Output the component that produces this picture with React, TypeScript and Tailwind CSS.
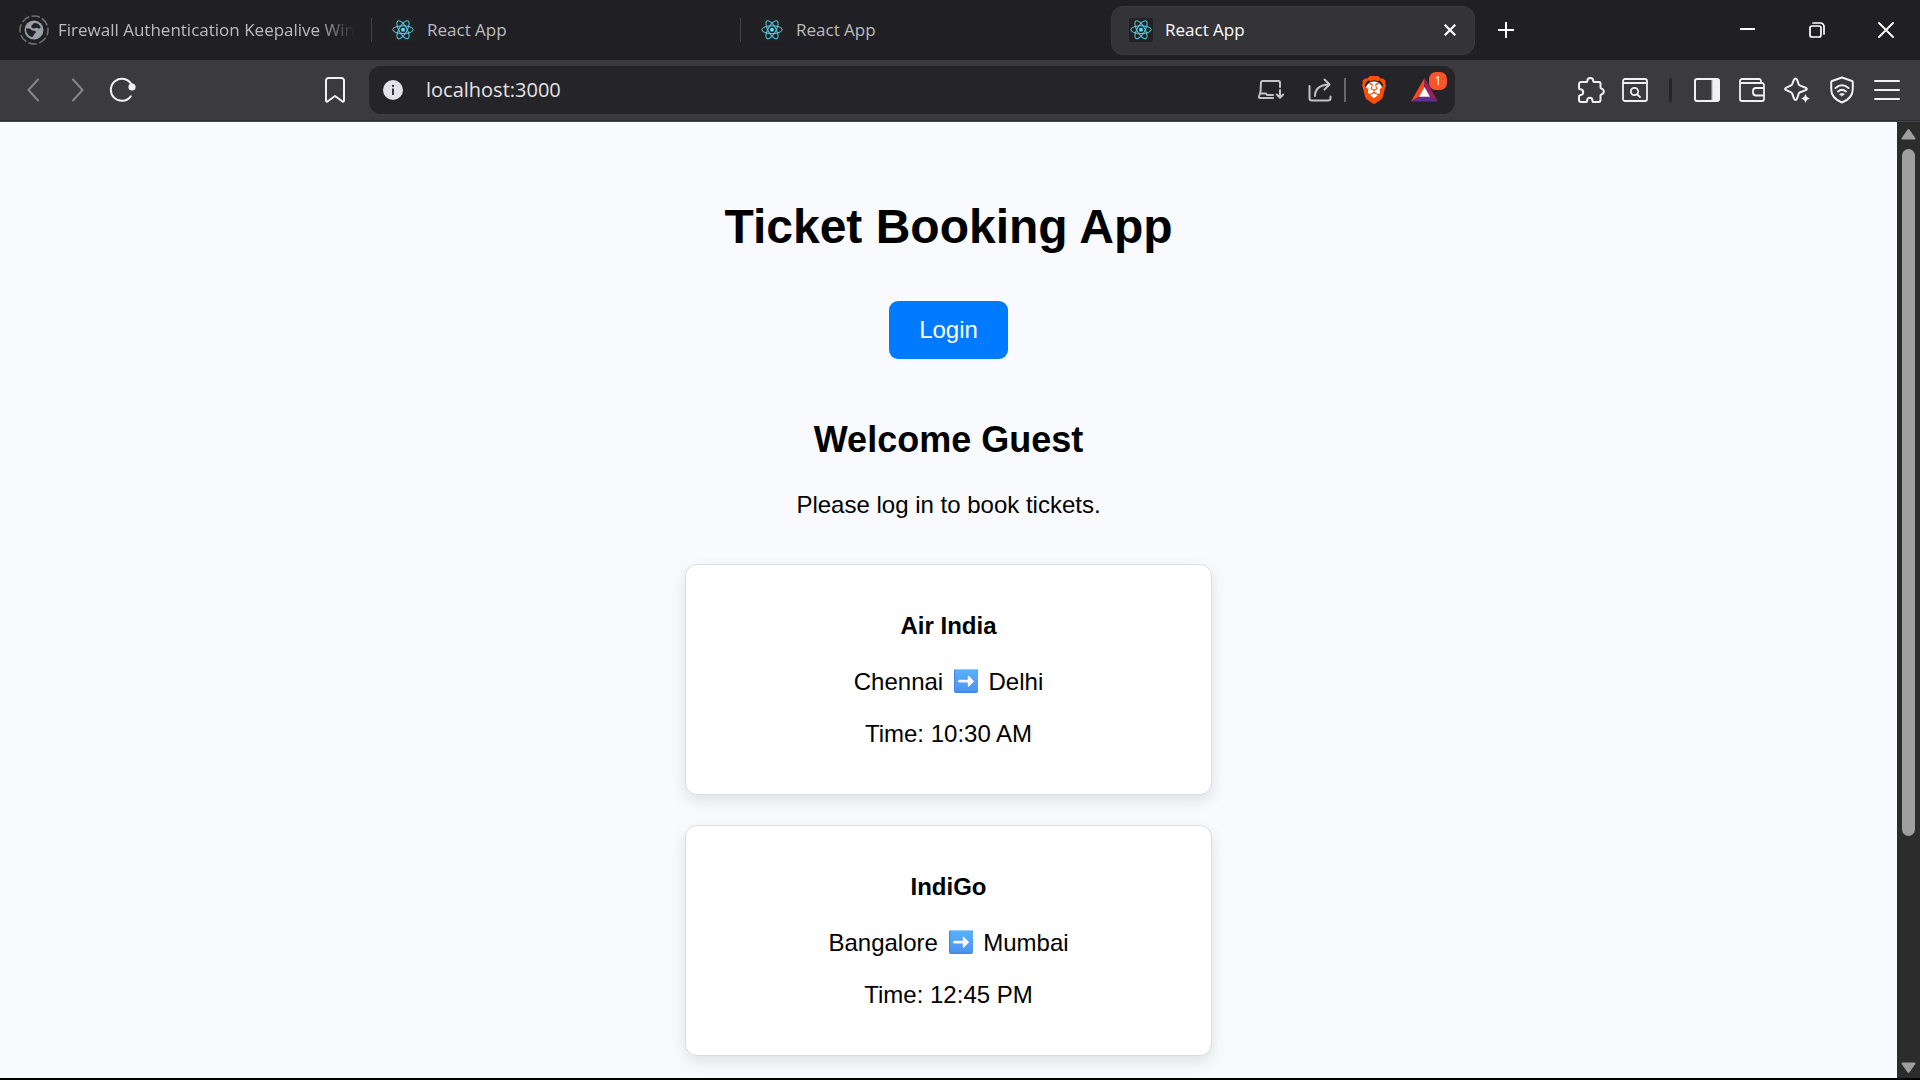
import type { ReactNode } from "react";
import { SiBrave } from "react-icons/si";

const strokeProps = {
  fill: "none",
  stroke: "currentColor",
  strokeWidth: 2,
  strokeLinecap: "round" as const,
  strokeLinejoin: "round" as const,
  "aria-hidden": true,
};

function ReactLogo() {
  return (
    <svg viewBox="0 0 24 24" className="size-6 shrink-0" aria-hidden="true">
      <rect width="24" height="24" rx="2" fill="#222222" />
      <g fill="none" stroke="#5ccfee" strokeWidth="1">
        <ellipse cx="12" cy="11.7" rx="10.2" ry="3.9" />
        <ellipse cx="12" cy="11.7" rx="10.2" ry="3.9" transform="rotate(60 12 11.7)" />
        <ellipse cx="12" cy="11.7" rx="10.2" ry="3.9" transform="rotate(120 12 11.7)" />
      </g>
      <circle cx="12" cy="11.7" r="2" fill="#61dafb" />
    </svg>
  );
}

function LoadingGlobe() {
  return (
    <svg viewBox="0 0 32 32" className="size-8 shrink-0" aria-hidden="true">
      <circle cx="16" cy="16" r="14" fill="none" stroke="#6f6f73" strokeWidth="1.6" strokeDasharray="8.6 2.4" strokeDashoffset="3" />
      <circle cx="16" cy="16" r="9.500" fill="#9aa0a6" />
      <path d="M8 14.500c2.300 0 4.300-.200 5 .900.800 1.200 1.700 1.300 3.300 1.300 1.500 0 2 1.300 1.200 2.300-.700.900-1.800 1-1.900 2.300-.100 1-.700 1.700-1.700 1.700C10.500 22 7.800 19 8 14.500Z" fill="#201f24" />
      <path d="M16 9c3-.200 5.600 1.400 6.800 4.200-.900 1.400-2.300 1.500-3.400.900-1.300-.700-2.400.400-3.900.300-1.700-.100-2.600-1.500-2-2.900.300-.800 1.400-.700 1.700-1.300.2-.5.400-.9.800-1.200Z" fill="#201f24" />
    </svg>
  );
}

function RouteArrow() {
  return (
    <svg viewBox="0 0 24 24" className="mx-1 inline-block size-6 align-[-3px]" role="img" aria-label="to">
      <defs>
        <linearGradient id="tile" x1="0" y1="0" x2="0" y2="1">
          <stop offset="0" stopColor="#58b0fb" />
          <stop offset="1" stopColor="#4d94ee" />
        </linearGradient>
      </defs>
      <rect width="24" height="24" rx="2" fill="#4584e4" />
      <rect x="1" y="1" width="23" height="21.500" rx="2" fill="url(#tile)" />
      <rect x="1" width="22" height="1" rx=".5" fill="#8ed0f8" />
      <path d="M5.500 12.200h12" stroke="#fdf4ff" strokeWidth="2.800" strokeLinecap="round" />
      <path d="m14.500 7.500 4.700 4.700-4.700 4.700Z" fill="#fdf4ff" stroke="#fdf4ff" strokeWidth="1.400" strokeLinejoin="round" />
    </svg>
  );
}

function IconButton({ label, className = "", children }: { label: string; className?: string; children: ReactNode }) {
  return (
    <button type="button" aria-label={label} className={`grid h-9 shrink-0 place-items-center ${className}`}>
      {children}
    </button>
  );
}

function Tab({ children, title, divided }: { children: ReactNode; title: string; divided?: boolean }) {
  return (
    <button
      type="button"
      className={`flex h-6 w-[369px] min-w-0 items-center pl-[19px] pr-4 text-left text-[#bcbcbf] ${divided ? "border-l border-[#45444a]" : ""}`}
    >
      {children}
      <span className="overflow-hidden whitespace-nowrap pl-3 leading-6">{title}</span>
    </button>
  );
}

function TabStrip() {
  return (
    <header className="flex h-[60px] shrink-0 items-center bg-[#201f24] text-[17px]">
      <button
        type="button"
        className="flex h-8 w-[371px] min-w-0 items-center gap-2 pl-[18px] pr-4 text-left text-[#bcbcbf]"
      >
        <LoadingGlobe />
        <span className="whitespace-nowrap leading-6 [mask-image:linear-gradient(to_right,black_88%,transparent)]">
          Firewall Authentication Keepalive Win
        </span>
      </button>
      <Tab title="React App" divided><ReactLogo /></Tab>
      <Tab title="React App" divided><ReactLogo /></Tab>
      <div className="ml-[2px] flex h-[49px] w-[364px] min-w-0 items-center rounded-xl border border-[#3a393e] bg-[#343338] pl-[17px] pr-3 text-white">
        <ReactLogo />
        <span className="flex-1 pl-3 leading-6">React App</span>
        <IconButton label="Close tab" className="w-6">
          <svg viewBox="0 0 12 12" className="size-3" {...strokeProps} strokeWidth={2.2} strokeLinecap="butt"><path d="m.7.7 10.600 10.600M11.300.7.7 11.300" /></svg>
        </IconButton>
      </div>
      <IconButton label="New tab" className="w-[62px] text-white">
        <svg viewBox="0 0 16 16" className="size-4" {...strokeProps} strokeLinecap="butt"><path d="M8 0v16M0 8h16" /></svg>
      </IconButton>
      <div className="ml-auto flex text-white">
        <IconButton label="Minimize" className="w-[69px]">
          <svg viewBox="0 0 16 16" className="size-4" {...strokeProps} strokeLinecap="butt"><path d="M0 7h15" /></svg>
        </IconButton>
        <IconButton label="Restore" className="w-[69px]">
          <svg viewBox="0 0 16 16" className="size-4" {...strokeProps} strokeWidth={1.700}>
            <rect x="1" y="4" width="11" height="11" rx="2" />
            <path d="M4 1h7.500A3.500 3.500 0 0 1 15 4.500V12" />
          </svg>
        </IconButton>
        <IconButton label="Close window" className="w-[69px]">
          <svg viewBox="0 0 16 16" className="size-4" {...strokeProps} strokeWidth={1.800}><path d="m1 1 14 14M15 1 1 15" /></svg>
        </IconButton>
      </div>
    </header>
  );
}

function AddressBar() {
  return (
    <div className="flex h-12 w-[1086px] min-w-0 items-center rounded-xl bg-[#252428] pl-[14px] pr-2 text-[#c3c2c8]">
      <IconButton label="Site information" className="w-5">
        <svg viewBox="0 0 20 20" className="size-5" aria-hidden="true">
          <circle cx="10" cy="10" r="10" fill="#e3e2e8" />
          <path d="M10 8.600V15" stroke="#252428" strokeWidth="1.800" />
          <circle cx="10" cy="5.900" r="1.100" fill="#252428" />
        </svg>
      </IconButton>
      <input
        aria-label="Address"
        defaultValue="localhost:3000"
        className="min-w-0 flex-1 bg-transparent pl-[23px] text-[20px] leading-7 text-[#e4e3e8] outline-none"
      />
      <IconButton label="Install app" className="w-[26px]">
        <svg viewBox="0 0 26 20" className="h-5 w-[26px]" {...strokeProps} strokeWidth={2}>
          <path d="M22 7V2.500A1.500 1.500 0 0 0 20.500 1H4.500A1.500 1.500 0 0 0 3 2.500L2.500 12 1 16.500c-.3.900.2 1.500 1 1.500h13M2.500 13.500h5.500l1 1.500h6" />
          <path d="M22 10v7.500M18.800 14.500l3.200 3.200 3.200-3.200" />
        </svg>
      </IconButton>
      <IconButton label="Share" className="ml-6 w-6">
        <svg viewBox="0 0 24 24" className="size-6" {...strokeProps} strokeWidth={2}>
          <path d="M1.500 8v12a2.500 2.500 0 0 0 2.500 2.500h16a2.500 2.500 0 0 0 2.500-2.500v-1.500" />
          <path d="M7 18c0-7.500 4.500-11 14-11.500M16.500 1.500l5 5-5 5" />
        </svg>
      </IconButton>
      <span className="ml-3 h-6 w-[2px] bg-[#68676c]" />
      <IconButton label="Brave Shields" className="ml-[14px] w-7">
        <span className="grid size-7 place-items-center bg-[radial-gradient(circle,white_8px,transparent_9px)]">
          <SiBrave className="size-7 text-[#fb4f08]" />
        </span>
      </IconButton>
      <button type="button" aria-label="Brave Rewards" className="relative ml-[23px] grid h-9 w-9 items-center">
        <svg viewBox="0 0 27 24" className="h-6 w-[27px]" aria-hidden="true">
          <path d="M13.500 0 0 23.500 8.300 18.500 13.500 9Z" fill="#ff4724" />
          <path d="M13.500 0 27 23.500 18.700 18.500 13.500 9Z" fill="#9e1f63" />
          <path d="M0 23.500h27l-8.300-5H8.300Z" fill="#662d91" />
          <path d="m13.500 9 5.500 9.700H8Z" fill="#fff" />
        </svg>
        <span className="absolute top-0 right-0 grid size-[18px] place-items-center rounded-[7px] bg-[#fb542b] text-[12px] leading-none text-white">1</span>
      </button>
    </div>
  );
}

function Toolbar() {
  return (
    <nav aria-label="Browser toolbar" className="flex h-[62px] shrink-0 items-center border-b border-[#45444a] bg-[#3b3a3f] pb-px pl-[22px] pr-5 text-[#f1f1f4] shadow-[inset_0_-1px_#2f2e33]">
      <IconButton label="Back" className="w-[22px] text-[#86858a]">
        <svg viewBox="0 0 12 24" className="h-6 w-3" {...strokeProps}><path d="M11 1.500 1.500 12 11 22.500" /></svg>
      </IconButton>
      <IconButton label="Forward" className="ml-[23px] w-[22px] text-[#86858a]">
        <svg viewBox="0 0 12 24" className="h-6 w-3" {...strokeProps}><path d="M1 1.500 10.500 12 1 22.500" /></svg>
      </IconButton>
      <IconButton label="Reload" className="ml-5 w-[28px]">
        <svg viewBox="0 0 28 26" className="h-[26px] w-7" {...strokeProps}>
          <path d="M21.700 19.300A11 11 0 1 1 22.500 7.500" />
          <circle cx="23" cy="10" r="2.600" fill="currentColor" />
        </svg>
      </IconButton>
      <IconButton label="Bookmark this tab" className="ml-[187px] w-[22px]">
        <svg viewBox="0 0 20 26" className="h-[26px] w-5" {...strokeProps}><path d="M1 3.500A2.500 2.500 0 0 1 3.500 1h13A2.500 2.500 0 0 1 19 3.500v20c0 1.200-1 1.600-1.800.8L10 19l-7.200 5.300c-.8.800-1.800.4-1.800-.8Z" /></svg>
      </IconButton>
      <div className="ml-[23px] flex min-w-0"><AddressBar /></div>
      <div className="ml-auto flex items-center">
        <IconButton label="Extensions" className="w-7">
          <svg viewBox="0 0 28 28" className="size-7" {...strokeProps}>
            <path d="M4 6h5.500c.5 0 .8-.3.800-.8C10.300 3 11.700 2 13.300 2s3 1 3 3.200c0 .5.300.8.800.8H22a1.500 1.500 0 0 1 1.500 1.500v4c0 .6.300.9.900 1.100 1.600.5 2.400 1.500 2.400 2.900s-.8 2.500-2.400 3c-.6.200-.9.500-.9 1.100V24a2 2 0 0 1-2 2H16.500c-.7 0-1-.4-1-1 0-2.200-1.200-3.200-2.700-3.200s-2.700 1-2.700 3.200c0 .6-.3 1-1 1H4a2 2 0 0 1-2-2v-3.800c0-.7.400-1 1-1 2.200-.2 3.200-1.500 3.200-3s-1-2.900-3.200-3c-.6 0-1-.4-1-1V8a2 2 0 0 1 2-2Z" />
          </svg>
        </IconButton>
        <IconButton label="Search tabs" className="ml-[17px] w-[26px]">
          <svg viewBox="0 0 26 24" className="h-6 w-[26px]" {...strokeProps} strokeWidth={1.800}>
            <rect x="1" y="1" width="24" height="22" rx="2" /><path d="M1 5h24" /><circle cx="12.500" cy="13.500" r="3.700" /><path d="m15.300 16.300 2.700 2.700" />
          </svg>
        </IconButton>
        <span className="ml-[21px] h-6 w-[3px] rounded-full bg-[#252428]" />
        <IconButton label="Side panel" className="ml-[22px] w-[26px]">
          <svg viewBox="0 0 26 24" className="h-6 w-[26px]" {...strokeProps}>
            <rect x="1" y="1" width="24" height="22" rx="2" /><path d="M18.500 1.500h6v21h-6Z" fill="currentColor" strokeWidth="1" />
          </svg>
        </IconButton>
        <IconButton label="Wallet" className="ml-[19px] w-[26px]">
          <svg viewBox="0 0 26 24" className="h-6 w-[26px]" {...strokeProps} strokeWidth={1.800}>
            <path d="M22 5V3a2 2 0 0 0-2-2H3a2 2 0 0 0-2 2v18a2 2 0 0 0 2 2h20a2 2 0 0 0 2-2V7a2 2 0 0 0-2-2H1.500M25 10h-8a3 3 0 0 0-3 3v1.500a3 3 0 0 0 3 3h8" />
          </svg>
        </IconButton>
        <IconButton label="Leo AI" className="ml-[19px] w-[26px]">
          <svg viewBox="0 0 26 26" className="size-[26px]" {...strokeProps}>
            <path d="M11.500 1.500c.7 0 1.200.4 1.500 1.100l1.700 4.500c.3.700.8 1.200 1.500 1.500l5.500 2.100c1.500.6 1.500 1.800 0 2.400l-5.500 2.100c-.7.300-1.200.8-1.500 1.500l-1.700 5c-.6 1.600-2.400 1.600-3 0l-1.800-5c-.3-.7-.8-1.200-1.500-1.500l-4.500-2.100c-1.500-.6-1.500-1.800 0-2.400l4.500-2.100c.7-.3 1.200-.8 1.500-1.500l1.800-4.500c.3-.7.8-1.100 1.500-1.100Z" />
            <path d="m21.500 17 1.400 3.100 3.100 1.400-3.100 1.400-1.400 3.100-1.400-3.100-3.100-1.400 3.100-1.400Z" fill="currentColor" stroke="none" />
          </svg>
        </IconButton>
        <IconButton label="VPN" className="ml-5 w-[24px]">
          <svg viewBox="0 0 24 28" className="h-7 w-6" {...strokeProps}>
            <path d="M12 1.500 22 5c.5.200.8.600.8 1.200V13c0 6-4.300 11-10.800 13.500C5.500 24 1.200 19 1.200 13V6.200c0-.6.300-1 .8-1.200Z" />
            <path d="M5.500 12c4-3.400 9-3.400 13 0M8 15.500c2.500-2 5.500-2 8 0" />
            <path d="M9.500 18.200c1.600-1.200 3.400-1.200 5 0L12 20Z" fill="currentColor" strokeWidth=".5" />
          </svg>
        </IconButton>
        <IconButton label="Menu" className="ml-[20px] w-[26px]">
          <svg viewBox="0 0 26 20" className="h-5 w-[26px]" {...strokeProps}><path d="M1 1h24M1 10h24M1 19h24" /></svg>
        </IconButton>
      </div>
    </nav>
  );
}

const flights = [
  { airline: "Air India", from: "Chennai", to: "Delhi", time: "10:30 AM" },
  { airline: "IndiGo", from: "Bangalore", to: "Mumbai", time: "12:45 PM" },
];

function BookingPage() {
  return (
    <main className="flex min-w-0 flex-1 flex-col items-center overflow-hidden bg-[#f8fafe] pt-[77px] text-center font-['Liberation_Sans',Arial,sans-serif] text-[24px] leading-7 text-black">
      <h1 className="text-[48px] font-bold leading-[56px]">Ticket Booking App</h1>
      <button type="button" className="mt-[46px] rounded-[9px] bg-[#007bff] px-[30px] py-[15px] text-white">Login</button>
      <h2 className="mt-[61px] text-[36px] font-bold leading-10">Welcome Guest</h2>
      <p className="mt-[31px]">Please log in to book tickets.</p>
      <div className="mt-[45px] flex w-[527px] max-w-full flex-col gap-[30px]">
        {flights.map((flight) => (
          <article key={flight.airline} className="rounded-xl border border-[#dddddd] bg-white pb-[46px] pt-[47px] shadow-[0_6px_15px_rgba(0,0,0,0.1)]">
            <h3 className="font-bold">{flight.airline}</h3>
            <p className="mt-7">{flight.from} <RouteArrow /> {flight.to}</p>
            <p className="mt-6">Time: {flight.time}</p>
          </article>
        ))}
      </div>
    </main>
  );
}

function ScrollBar() {
  return (
    <div className="flex w-[23px] shrink-0 flex-col items-center bg-[#2c2c2c] pb-1 pt-[6px] text-[#9f9f9f]" aria-hidden="true">
      <svg viewBox="0 0 15 12" className="h-3 w-[15px]"><path d="M7.500 2 13.500 10.500h-12Z" fill="currentColor" stroke="currentColor" strokeWidth="2" strokeLinejoin="round" /></svg>
      <div className="flex w-[13px] flex-1 flex-col py-[9px]">
        <div className="basis-[76%] rounded-full bg-[#9f9f9f]" />
      </div>
      <svg viewBox="0 0 15 12" className="h-3 w-[15px]"><path d="M7.500 10 13.500 1.500h-12Z" fill="currentColor" stroke="currentColor" strokeWidth="2" strokeLinejoin="round" /></svg>
    </div>
  );
}

export default function App() {
  return (
    <div className="flex h-screen flex-col overflow-hidden border-b-2 border-black bg-[#201f24] font-['Open_Sans','Noto_Sans',sans-serif]">
      <TabStrip />
      <Toolbar />
      <div className="flex min-h-0 flex-1">
        <BookingPage />
        <ScrollBar />
      </div>
    </div>
  );
}
